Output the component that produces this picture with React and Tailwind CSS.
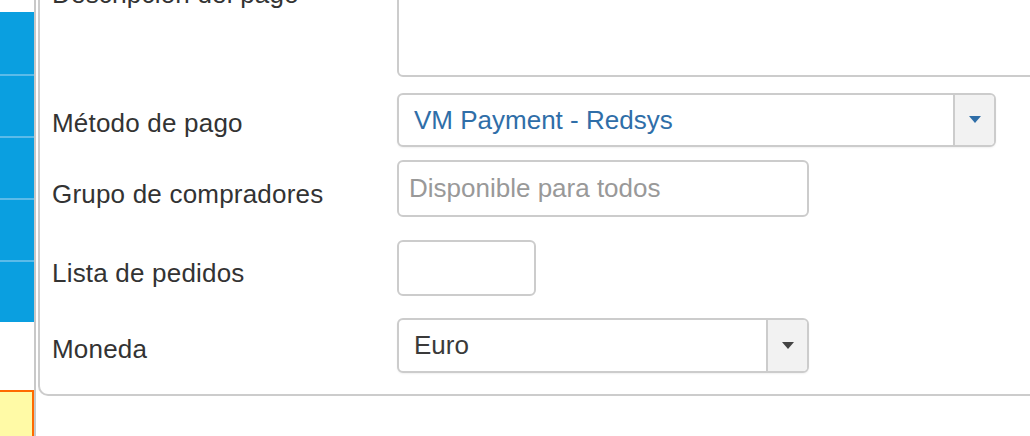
import React from "react";

function Caret({ color }) {
  return (
    <div
      className={`w-0 h-0 border-l-[6px] border-r-[6px] border-t-[7px] border-l-transparent border-r-transparent ${color}`}
    />
  );
}

function Label({ children, pt }) {
  return (
    <div className={`w-[345px] shrink-0 text-[26px] leading-[30px] tracking-[0.2px] text-[#333333] whitespace-nowrap ${pt}`}>
      {children}
    </div>
  );
}

export default function App() {
  return (
    <div
      className="w-[1030px] h-[436px] overflow-hidden bg-white flex items-start"
      style={{ fontFamily: '"Liberation Sans", Arial, sans-serif' }}
    >
      {/* Left sidebar strip */}
      <div className="w-[34px] h-[436px] shrink-0 flex flex-col">
        <div className="h-[12px] bg-white" />
        <div className="bg-[#0a9fe0] flex flex-col">
          <div className="h-[62px]" />
          <div className="h-[62px] border-t-2 border-[#5bbbe9]" />
          <div className="h-[62px] border-t-2 border-[#5bbbe9]" />
          <div className="h-[62px] border-t-2 border-[#5bbbe9]" />
          <div className="h-[62px] border-t-2 border-[#5bbbe9]" />
        </div>
        <div className="h-[68px] bg-white" />
        <div className="flex-1 bg-[#fffaa6] border-t-2 border-r-2 border-[#ff6a00]" />
      </div>
      <div className="w-[2px] h-[436px] shrink-0 bg-[#c8c8c8]" />

      {/* Panel */}
      <div className="ml-[2px] -mt-[38px] w-[1100px] shrink-0 border-l-2 border-b-2 border-[#cccccc] rounded-bl-[10px] pl-[12px] pb-[21px] flex flex-col">
        {/* Descripción */}
        <div className="flex items-start">
          <Label pt="pt-[17px]">Descripción del pago</Label>
          <div className="h-[115px] flex-1 border-2 border-[#cccccc] rounded-[6px] bg-white" />
        </div>

        {/* Método de pago */}
        <div className="flex items-start mt-[16px]">
          <Label pt="pt-[15px]">Método de pago</Label>
          <div className="w-[599px] h-[54px] flex border-2 border-[#cccccc] rounded-[6px] overflow-hidden bg-white shadow-[0_1px_2px_rgba(0,0,0,0.06)]">
            <div className="flex-1 flex items-center pl-[15px] text-[26px] text-[#2f6ea8] whitespace-nowrap">
              VM Payment - Redsys
            </div>
            <div className="w-[41px] border-l-2 border-[#cccccc] bg-[#f2f2f2] flex items-center justify-center pb-[2px]">
              <Caret color="border-t-[#2f6ea8]" />
            </div>
          </div>
        </div>

        {/* Grupo de compradores */}
        <div className="flex items-start mt-[13px]">
          <Label pt="pt-[19px]">Grupo de compradores</Label>
          <div className="w-[412px] h-[57px] flex items-center border-2 border-[#cccccc] rounded-[6px] bg-white pl-[10px] text-[26px] text-[#999999] whitespace-nowrap">
            Disponible para todos
          </div>
        </div>

        {/* Lista de pedidos */}
        <div className="flex items-start mt-[23px]">
          <Label pt="pt-[18px]">Lista de pedidos</Label>
          <div className="w-[139px] h-[56px] border-2 border-[#cccccc] rounded-[6px] bg-white" />
        </div>

        {/* Moneda */}
        <div className="flex items-start mt-[22px]">
          <Label pt="pt-[16px]">Moneda</Label>
          <div className="w-[412px] h-[55px] flex border-2 border-[#cccccc] rounded-[6px] overflow-hidden bg-white shadow-[0_1px_2px_rgba(0,0,0,0.06)]">
            <div className="flex-1 flex items-center pl-[15px] text-[26px] text-[#3a3a3a] whitespace-nowrap">
              Euro
            </div>
            <div className="w-[41px] border-l-2 border-[#cccccc] bg-[#f2f2f2] flex items-center justify-center">
              <Caret color="border-t-[#444444]" />
            </div>
          </div>
        </div>
      </div>
    </div>
  );
}
